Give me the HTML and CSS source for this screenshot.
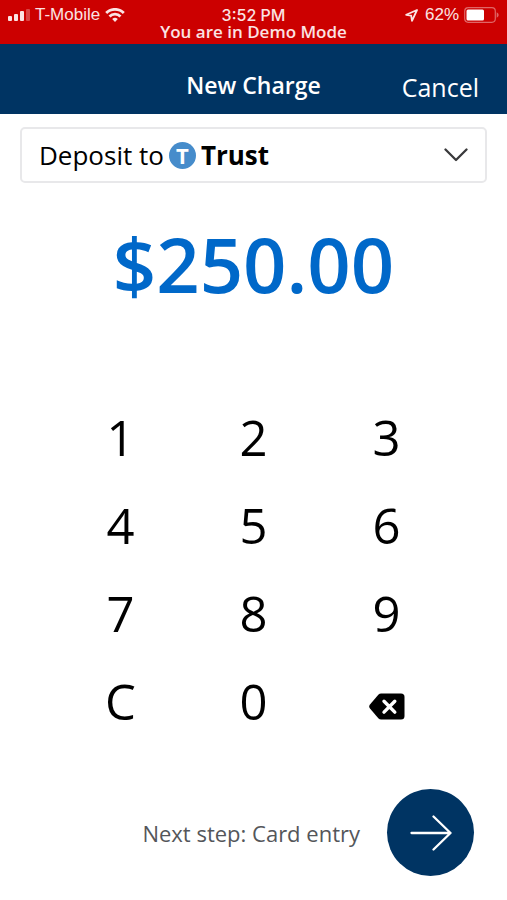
FILE: index.html
```html
<!DOCTYPE html>
<html lang="en">
<head>
<meta charset="utf-8">
<meta name="viewport" content="width=device-width, initial-scale=1">
<title>New Charge</title>
<link rel="stylesheet" href="styles.css">
</head>
<body>
<div class="app">
  <div class="status">
    <div class="status-row">
      <div class="status-side">
        <svg class="signal" width="22" height="12" viewBox="0 0 22 12" fill="currentColor" aria-hidden="true"><rect x="0" y="7" width="4" height="5" rx="1"/><rect x="6" y="5" width="4" height="7" rx="1"/><rect x="12" y="2" width="4" height="10" rx="1"/><rect x="18" y="0" width="4" height="12" rx="1" opacity=".3"/></svg>
        <span>T-Mobile</span>
        <svg class="wifi" width="20" height="14" viewBox="0 0 20 14" fill="none" stroke="currentColor" stroke-width="2.8" aria-hidden="true"><path d="M1.200 5a12.400 12.400 0 0 1 17.600 0M4.500 8.400a7.800 7.800 0 0 1 11 0"/><path d="M7.200 11a4 4 0 0 1 5.600 0L10 13.900z" fill="currentColor" stroke="none"/></svg>
      </div>
      <span class="time">3:52 PM</span>
      <div class="status-side status-end">
        <svg class="location" width="13" height="13" viewBox="0 0 13 13" fill="none" stroke="currentColor" stroke-width="1.8" stroke-linejoin="round" aria-hidden="true"><path d="M12 1 1.200 5.800l5 .9.800 5.100z"/></svg>
        <span>62%</span>
        <svg width="35" height="16" viewBox="0 0 35 16" aria-hidden="true"><rect x=".7" y=".7" width="30.600" height="14.600" rx="3.500" fill="none" stroke="#fff" stroke-opacity=".4" stroke-width="1.200"/><rect x="2.500" y="2.500" width="17.500" height="11" rx="1.500" fill="#fff"/><path d="M32.700 5.300q2 1 2 2.700t-2 2.700z" fill="#fff" fill-opacity=".4"/></svg>
      </div>
    </div>
    <p class="demo">You are in Demo Mode</p>
  </div>
  <header class="header">
    <h1>New Charge</h1>
    <button class="cancel" type="button">Cancel</button>
  </header>
  <main class="main">
    <div class="deposit">
      <label for="account">Deposit to</label>
      <span class="badge" aria-hidden="true">T</span>
      <select id="account"><option>Trust</option></select>
      <svg width="24" height="14" viewBox="0 0 24 14" fill="none" stroke="#3a3a3c" stroke-width="2.3" stroke-linecap="round" stroke-linejoin="round" aria-hidden="true"><path d="M1.500 1.500 12 12 22.500 1.500"/></svg>
    </div>
    <output class="amount">$250.00</output>
    <div class="keypad">
      <button type="button">1</button><button type="button">2</button><button type="button">3</button>
      <button type="button">4</button><button type="button">5</button><button type="button">6</button>
      <button type="button">7</button><button type="button">8</button><button type="button">9</button>
      <button type="button">C</button><button type="button">0</button>
      <button class="erase" type="button" aria-label="Delete"><svg width="36" height="27" viewBox="0 0 36 27" aria-hidden="true"><path d="M12.200.5H32a3.500 3.500 0 0 1 3.500 3.500v19a3.500 3.500 0 0 1-3.500 3.500H12.200q-1.700 0-2.900-1.200L1 15.500q-1.600-2 0-4L9.300 1.700Q10.500.5 12.200.5z" fill="#000"/><path d="m15 8.300 10.800 10.800M25.800 8.300 15 19.100" stroke="#fff" stroke-width="3.400" stroke-linecap="round"/></svg></button>
    </div>
  </main>
  <footer class="footer">
    <span>Next step: Card entry</span>
    <button class="next" type="button" aria-label="Next"><svg width="42" height="36" viewBox="0 0 42 36" fill="none" stroke="#fff" stroke-width="2.300" stroke-linecap="round" stroke-linejoin="round" aria-hidden="true"><path d="M1.500 18H40.500M23.500 1.500 40.500 18 23.500 34.500"/></svg></button>
  </footer>
</div>
</body>
</html>
```
FILE: styles.css
```css
* { box-sizing: border-box; }
body {
  margin: 0;
  background: #fff;
  color: #000;
  font-family: "Open Sans", "Noto Sans", sans-serif;
}
button, select {
  margin: 0;
  padding: 0;
  border: 0;
  background: none;
  color: inherit;
  font: inherit;
}
.app {
  display: flex;
  flex-direction: column;
  min-height: 100vh;
}
.status {
  height: 44px;
  padding: 6px 8px 0;
  background: #c00;
  color: #fbe3e3;
}
.status-row {
  display: grid;
  grid-template-columns: 1fr auto 1fr;
  align-items: center;
  font-family: "Liberation Sans", sans-serif;
  font-size: 17px;
  line-height: 18px;
}
.status-side {
  display: flex;
  align-items: center;
  gap: 5px;
}
.status-end { justify-content: flex-end; }
.location { margin-right: 2px; }
.time {
  font-family: Inter, "Liberation Sans", sans-serif;
  font-size: 16px;
  font-weight: 500;
}
.demo {
  margin: 0;
  text-align: center;
  font-size: 17px;
  font-weight: 600;
  line-height: 16px;
}
.header {
  display: grid;
  grid-template-columns: 1fr auto 1fr;
  align-items: center;
  height: 70px;
  padding: 12px 28px 0;
  background: #003463;
  color: #fff;
}
h1 {
  grid-column: 2;
  margin: 0;
  font-size: 23px;
  font-weight: 600;
  line-height: 32px;
}
.cancel {
  justify-self: end;
  padding-top: 3px;
  font-size: 25px;
  line-height: 36px;
}
.main { padding: 13px 20px 0; }
.deposit {
  display: flex;
  align-items: center;
  gap: 5px;
  height: 56px;
  padding: 0 17px;
  border: 2px solid #e8e8ea;
  border-radius: 5px;
  font-size: 26px;
}
.badge {
  width: 27px;
  height: 27px;
  border-radius: 50%;
  background: #468ccb;
  color: #fff;
  font-size: 22px;
  font-weight: 700;
  line-height: 27px;
  text-align: center;
}
.deposit select {
  flex: 1;
  appearance: none;
  font-weight: 700;
}
.amount {
  display: block;
  margin-top: 29px;
  color: #0068c9;
  font-size: 76px;
  font-weight: 600;
  line-height: 104px;
  text-align: center;
}
.keypad {
  display: grid;
  grid-template-columns: repeat(3, 1fr);
  grid-auto-rows: 88px;
  margin: 77px 34px 0;
}
.keypad button {
  font-size: 49px;
  line-height: 88px;
}
.erase svg {
  display: block;
  margin: 10px auto 0;
}
.footer {
  display: flex;
  align-items: center;
  justify-content: flex-end;
  gap: 27px;
  margin-top: auto;
  padding: 0 33px 24px;
  color: #54565a;
  font-size: 22px;
}
.next {
  display: grid;
  place-items: center;
  width: 87px;
  height: 87px;
  border-radius: 50%;
  background: #003463;
}
```
